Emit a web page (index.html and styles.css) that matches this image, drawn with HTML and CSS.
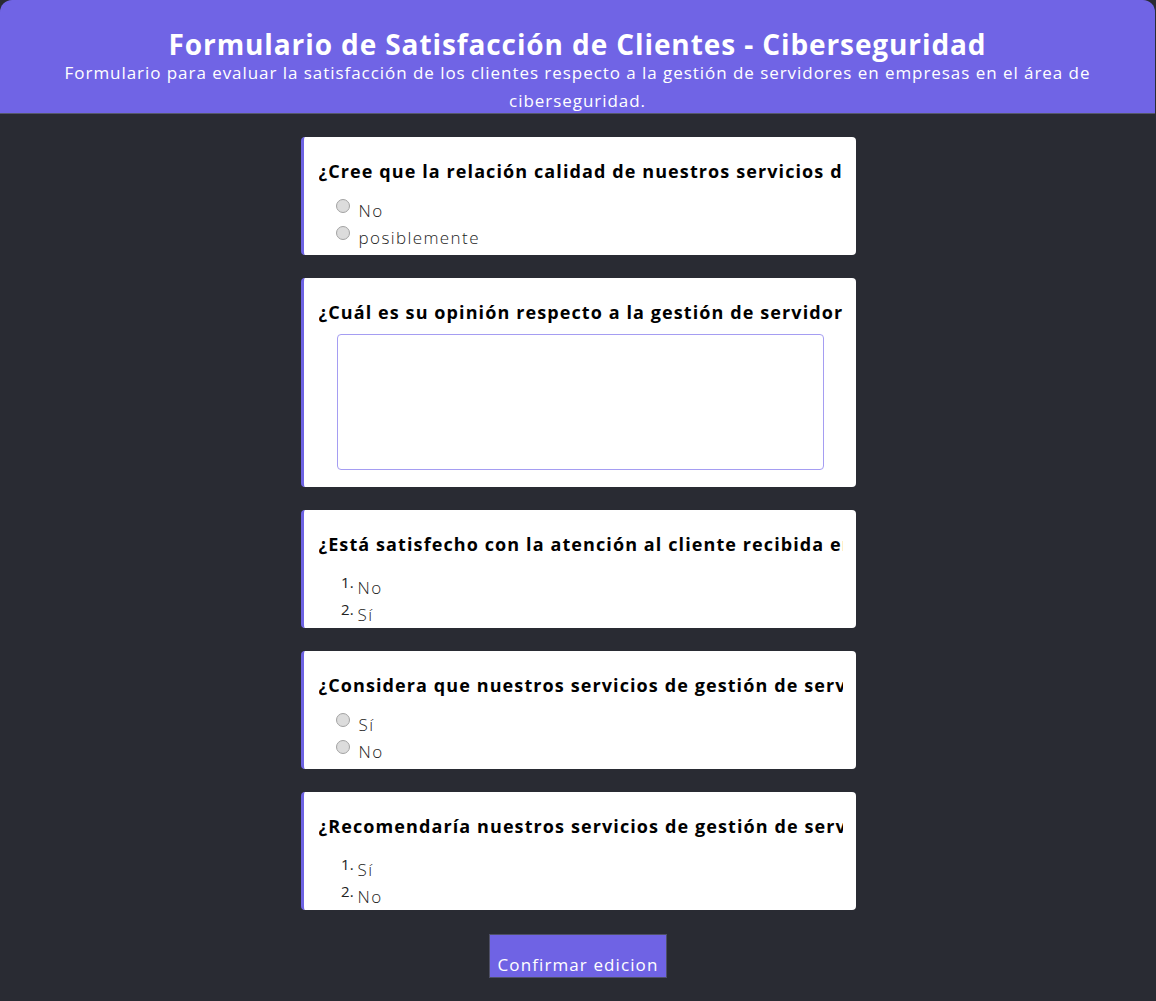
FILE: index.html
```html
<!DOCTYPE html>
<html lang="es">
<head>
<meta charset="utf-8">
<title>Formulario de Satisfacción de Clientes - Ciberseguridad</title>
<link rel="stylesheet" href="styles.css">
</head>
<body>
<div class="app">
  <header class="header">
    <h1 class="title">Formulario de Satisfacción de Clientes - Ciberseguridad</h1>
    <p class="subtitle">Formulario para evaluar la satisfacción de los clientes respecto a la gestión de servidores en empresas en el área de ciberseguridad.</p>
  </header>
  <main class="main">
    <section class="card">
      <div class="card-body">
        <h3 class="question">¿Cree que la relación calidad de nuestros servicios de</h3>
        <ul class="radios">
          <li class="radio-row"><input class="radio" type="radio" name="q1"><span class="opt">No</span></li>
          <li class="radio-row"><input class="radio" type="radio" name="q1"><span class="opt">posiblemente</span></li>
        </ul>
      </div>
    </section>
    <section class="card card-open">
      <h3 class="question">¿Cuál es su opinión respecto a la gestión de servidores</h3>
      <textarea class="answer"></textarea>
    </section>
    <section class="card">
      <div class="card-body">
        <h3 class="question">¿Está satisfecho con la atención al cliente recibida en</h3>
        <ol class="numbered">
          <li><span class="opt">No</span></li>
          <li><span class="opt">Sí</span></li>
        </ol>
      </div>
    </section>
    <section class="card">
      <div class="card-body">
        <h3 class="question">¿Considera que nuestros servicios de gestión de servidores</h3>
        <ul class="radios">
          <li class="radio-row"><input class="radio" type="radio" name="q4"><span class="opt">Sí</span></li>
          <li class="radio-row"><input class="radio" type="radio" name="q4"><span class="opt">No</span></li>
        </ul>
      </div>
    </section>
    <section class="card">
      <div class="card-body">
        <h3 class="question">¿Recomendaría nuestros servicios de gestión de servidores</h3>
        <ol class="numbered">
          <li><span class="opt">Sí</span></li>
          <li><span class="opt">No</span></li>
        </ol>
      </div>
    </section>
    <button class="confirm" type="button">Confirmar edicion</button>
  </main>
</div>
</body>
</html>
```

FILE: styles.css
```css
* { box-sizing: border-box; }

html, body {
  margin: 0;
  padding: 0;
  background: #ffffff;
}

body {
  font-family: "Open Sans", "DejaVu Sans", sans-serif;
}

.app {
  min-height: 100vh;
  background: #292b33;
  display: flex;
  flex-direction: column;
}

.header {
  background: #7064e5;
  border-radius: 12px 12px 0 0;
  height: 114px;
  border-bottom: 1px solid #55586a;
  text-align: center;
  color: #ffffff;
  padding-top: 29px;
  margin-right: 1px;
}

.title {
  margin: 0;
  font-size: 28px;
  line-height: 30px;
  font-weight: 700;
  letter-spacing: 0.9px;
}

.subtitle {
  margin: 0 auto;
  max-width: 1070px;
  font-size: 17px;
  line-height: 28px;
  font-weight: 400;
  letter-spacing: 0.95px;
}

.main {
  display: flex;
  flex-direction: column;
  align-items: center;
  padding-top: 23px;
  gap: 23px;
  flex: 1;
}

.card {
  width: 555px;
  background: #ffffff;
  border-left: 3px solid #6d63e3;
  border-radius: 4px;
  padding: 22px 13px 7px 15px;
}

.card-body {
  height: 89px;
  overflow: hidden;
}

.card-open {
  padding-bottom: 17px;
}

.question {
  margin: 0;
  font-size: 18px;
  line-height: 24px;
  font-weight: 700;
  letter-spacing: 1.1px;
  color: #000000;
  white-space: nowrap;
  overflow: hidden;
}

.radios {
  list-style: none;
  margin: 16px 0 0;
  padding: 0 0 0 17px;
}

.radio-row {
  display: flex;
  align-items: flex-start;
  height: 27px;
}

.radio {
  appearance: none;
  -webkit-appearance: none;
  width: 14px;
  height: 14px;
  margin: 0 9px 0 0;
  border-radius: 50%;
  border: 1px solid #a3a3a3;
  background: #dcdcdc;
  flex: none;
}

.opt {
  font-size: 17px;
  line-height: 20px;
  font-weight: 300;
  letter-spacing: 1.4px;
  color: #222222;
  margin-top: 2px;
}

.numbered {
  margin: 16px 0 0;
  padding: 0 0 0 39px;
  font-size: 15px;
  color: #222222;
}

.numbered li {
  height: 27px;
  line-height: 20px;
}

.numbered .opt {
  display: inline-block;
  vertical-align: -6px;
  margin-top: 0;
}

.answer {
  display: block;
  margin: 10px 0 0 18px;
  width: 487px;
  height: 136px;
  border: 1px solid #a59df2;
  border-radius: 4px;
  resize: none;
  background: #ffffff;
  font-family: inherit;
}

.confirm {
  margin-top: 1px;
  height: 44px;
  padding: 18px 8px 0;
  background: #6f63e4;
  border: 1px solid #4e5068;
  border-radius: 0;
  color: #ffffff;
  font-family: inherit;
  font-size: 17px;
  line-height: 22px;
  font-weight: 400;
  letter-spacing: 1.1px;
}
```
